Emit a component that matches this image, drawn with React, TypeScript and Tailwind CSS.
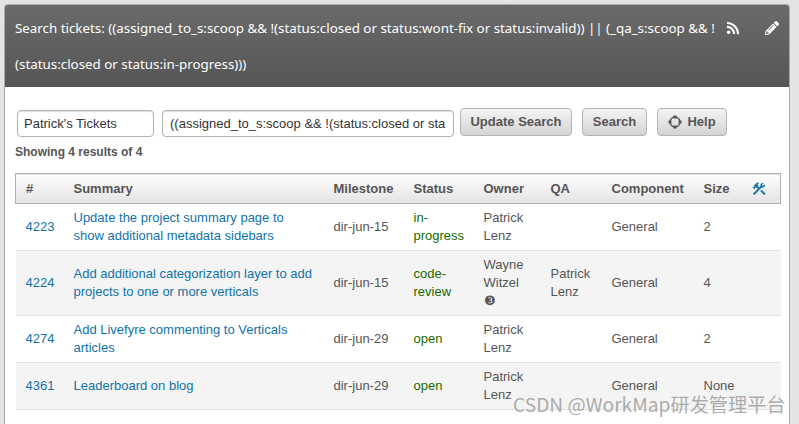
import { FaPencilAlt, FaRss } from 'react-icons/fa'
import { MdConstruction } from 'react-icons/md'

const tickets = [
  { id: '4223', summary: ['Update the project summary page to', 'show additional metadata sidebars'], milestone: 'dir-jun-15', status: ['in-', 'progress'], owner: ['Patrick', 'Lenz'], qa: [], component: 'General', size: '2' },
  { id: '4224', summary: ['Add additional categorization layer to add', 'projects to one or more verticals'], milestone: 'dir-jun-15', status: ['code-', 'review'], owner: ['Wayne', 'Witzel', '❸'], qa: ['Patrick', 'Lenz'], component: 'General', size: '4' },
  { id: '4274', summary: ['Add Livefyre commenting to Verticals', 'articles'], milestone: 'dir-jun-29', status: ['open'], owner: ['Patrick', 'Lenz'], qa: [], component: 'General', size: '2' },
  { id: '4361', summary: ['Leaderboard on blog'], milestone: 'dir-jun-29', status: ['open'], owner: ['Patrick', 'Lenz'], qa: [], component: 'General', size: 'None' },
]

function Lines({ lines }: { lines: string[] }) {
  return (
    <>
      {lines.map((l) => (
        <div key={l} className="whitespace-nowrap">{l}</div>
      ))}
    </>
  )
}

function HelpIcon() {
  return (
    <svg width="14" height="14" viewBox="0 0 14 14" fill="none" stroke="#555" className="shrink-0">
      <circle cx="7" cy="7" r="5" strokeWidth="1.3" />
      <path d="M7 0.5v3M7 10.5v3M0.5 7h3M10.5 7h3" strokeWidth="3.2" />
    </svg>
  )
}

const buttonClass = 'flex h-[28px] items-center rounded-[4px] border border-[#b4b4b4] bg-gradient-to-b from-[#f4f4f4] to-[#d4d4d4] text-[13px] font-bold text-[#555]'

export default function App() {
  return (
    <div className="h-[424px] w-[799px] overflow-hidden bg-[#e4e4e4] pl-[4px] pr-[9px] pt-[4px] font-['Liberation_Sans',sans-serif]">
      <div className="h-[500px] rounded-t-[4px] border-x border-t border-[#aaa] bg-white">
        <div className="relative h-[82px] rounded-t-[3px] bg-gradient-to-b from-[#6a6a6a] to-[#565656] pl-[10px] pt-[5px] font-['Noto_Sans',sans-serif] text-[13.35px] leading-[36px] text-white">
          <div className="whitespace-nowrap">Search tickets: ((assigned_to_s:scoop &amp;&amp; !(status:closed or status:wont-fix or status:invalid)) || (_qa_s:scoop &amp;&amp; !</div>
          <div className="whitespace-nowrap">(status:closed or status:in-progress)))</div>
          <FaRss size={14} className="absolute left-[721px] top-[16px]" />
          <FaPencilAlt size={14} className="absolute left-[760px] top-[16px]" />
        </div>

        <div className="pl-[10px] pr-[9px]">
          <div className="flex items-start pl-[2px] pt-[21px]">
            <div className="mt-[2px] flex h-[27px] w-[137px] items-center rounded-[4px] border border-[#b4b4b4] bg-white pl-[6px] text-[13px] text-[#333] shadow-[inset_0_1px_1px_#ddd]">Patrick's Tickets</div>
            <div className="ml-[8px] mt-[2px] flex h-[27px] w-[292px] items-center overflow-hidden whitespace-nowrap rounded-[4px] border border-[#b4b4b4] bg-white pl-[7px] text-[13px] text-[#333] shadow-[inset_0_1px_1px_#ddd]">((assigned_to_s:scoop &amp;&amp; !(status:closed or sta</div>
            <div className={`${buttonClass} ml-[6px] w-[112px] justify-center`}>Update Search</div>
            <div className={`${buttonClass} ml-[10px] w-[65px] justify-center`}>Search</div>
            <div className={`${buttonClass} ml-[10px] h-[27px] w-[70px] justify-center gap-[5px]`}>
              <HelpIcon />
              Help
            </div>
          </div>

          <div className="mt-[6px] h-[18px] text-[12px] font-bold leading-[18px] text-[#555]">Showing 4 results of 4</div>

          <table className="mt-[12px] w-[765px] table-fixed border-collapse text-[13px] leading-[18px] text-[#555]">
            <colgroup>
              <col className="w-[48px]" />
              <col className="w-[260px]" />
              <col className="w-[80px]" />
              <col className="w-[70px]" />
              <col className="w-[67px]" />
              <col className="w-[61px]" />
              <col className="w-[92px]" />
              <col className="w-[50px]" />
              <col className="w-[37px]" />
            </colgroup>
            <thead>
              <tr className="h-[30px] border border-[#b0b0b0] bg-gradient-to-b from-[#fdfdfd] to-[#e4e4e4] text-left font-bold">
                <th className="pl-[10px]">#</th>
                <th className="pl-[10px]">Summary</th>
                <th className="pl-[10px]">Milestone</th>
                <th className="pl-[10px]">Status</th>
                <th className="pl-[10px]">Owner</th>
                <th className="pl-[10px]">QA</th>
                <th className="pl-[10px]">Component</th>
                <th className="pl-[10px]">Size</th>
                <th className="pl-[7px]"><MdConstruction size={16} className="block text-[#1b75a8]" /></th>
              </tr>
            </thead>
            <tbody>
              {tickets.map((t, i) => (
                <tr key={t.id} className={`border-b border-[#e2e2e2] ${i % 2 === 1 ? 'bg-[#f4f4f4]' : 'bg-white'}`}>
                  <td className="py-[5px] pl-[10px] text-[#0f73a8]">{t.id}</td>
                  <td className="py-[5px] pl-[10px] text-[#0f73a8]"><Lines lines={t.summary} /></td>
                  <td className="py-[5px] pl-[10px]">{t.milestone}</td>
                  <td className="py-[5px] pl-[10px] text-[#1a6b00]"><Lines lines={t.status} /></td>
                  <td className="py-[5px] pl-[10px]"><Lines lines={t.owner} /></td>
                  <td className="py-[5px] pl-[10px]"><Lines lines={t.qa} /></td>
                  <td className="py-[5px] pl-[10px]">{t.component}</td>
                  <td className="py-[5px] pl-[10px]">{t.size}</td>
                  <td />
                </tr>
              ))}
            </tbody>
          </table>
        </div>
      </div>
      <div className="pointer-events-none absolute left-[513px] top-[392px] whitespace-nowrap font-['Noto_Sans_CJK_SC','Liberation_Sans',sans-serif] text-[19.2px] leading-[24px] text-[#8a8a8a]/70">CSDN @WorkMap研发管理平台</div>
    </div>
  )
}
